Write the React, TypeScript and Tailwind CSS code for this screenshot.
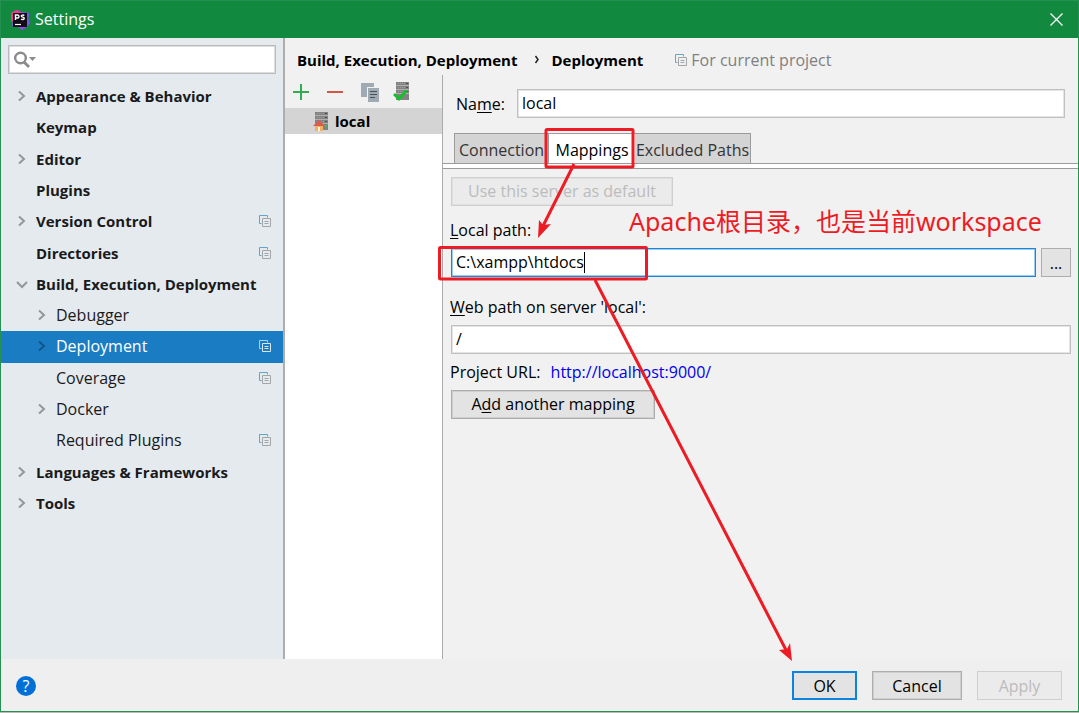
import { useState } from 'react';

type TreeItem = {
  label: string;
  level: 0 | 1;
  arrow?: 'right' | 'down';
  project?: boolean;
};

const treeItems: TreeItem[] = [
  { label: 'Appearance & Behavior', level: 0, arrow: 'right' },
  { label: 'Keymap', level: 0 },
  { label: 'Editor', level: 0, arrow: 'right' },
  { label: 'Plugins', level: 0 },
  { label: 'Version Control', level: 0, arrow: 'right', project: true },
  { label: 'Directories', level: 0, project: true },
  { label: 'Build, Execution, Deployment', level: 0, arrow: 'down' },
  { label: 'Debugger', level: 1, arrow: 'right' },
  { label: 'Deployment', level: 1, arrow: 'right', project: true },
  { label: 'Coverage', level: 1, project: true },
  { label: 'Docker', level: 1, arrow: 'right' },
  { label: 'Required Plugins', level: 1, project: true },
  { label: 'Languages & Frameworks', level: 0, arrow: 'right' },
  { label: 'Tools', level: 0, arrow: 'right' },
];

const tabs = ['Connection', 'Mappings', 'Excluded Paths'];

const fieldStyle = 'h-[29px] min-w-0 border border-[#c0c0c0] bg-white px-1 pb-[2px] shadow-[inset_0_0_0_1px_#e4e4e4] outline-none';

function AppLogo() {
  return (
    <svg width="20" height="20" viewBox="0 0 20 20" aria-hidden="true">
      <path d="M1 3 7 0l5 2 7 1-1 5 2 5-3 4-5 3-4-3-6-1 1-6z" fill="#9b45f2" />
      <path d="M1 3 7 0l5 3-9 8-2 1z" fill="#f23a8d" />
      <path d="m17 3 2 1-1 5 2 4-3 3z" fill="#7b53f5" />
      <rect x="3" y="3" width="14" height="14" fill="#120c18" />
      <path d="M5.500 10V5h2a1.400 1.400 0 0 1 0 3h-2M14.300 5.500c-.8-.6-3-.7-3 .6s3 .7 3 2.200-2.300 1.500-3.200.6" fill="none" stroke="#fff" strokeWidth="1.400" />
      <path d="M5 14.500h6" stroke="#fff" strokeWidth="1.200" />
    </svg>
  );
}

function Chevron({ down, selected }: { down?: boolean; selected?: boolean }) {
  return (
    <svg width="12" height="12" viewBox="0 0 12 12" fill="none" aria-hidden="true" className={selected ? 'text-[#165488]' : 'text-[#939799]'}>
      <path d={down ? 'M1 4l5 5 5-5' : 'M3 1.500l5 4.500-5 4.500'} stroke="currentColor" strokeWidth="2" />
    </svg>
  );
}

function ProjectIcon({ selected }: { selected?: boolean }) {
  const back = selected ? '#a8d5f2' : '#62a5c8';
  const front = selected ? '#d9e6ef' : '#a3a6a8';
  return (
    <svg width="12" height="12" viewBox="0 0 12 12" fill="none" aria-hidden="true">
      <path d="M2.500 8.500h-2v-8h8v2" stroke={back} />
      <path d="M3.500 3.500h8v8h-8z" stroke={front} />
      <path d="M5.500 6.500h4M5.500 8.500h4" stroke={front} />
    </svg>
  );
}

function ServerShape() {
  return (
    <>
      <path d="M4 0h13v18H4z" fill="#828282" />
      <path d="M4 3.500h13M4 7.500h13M4 11.500h13" stroke="#b0b0b0" />
      <path d="M6 1.500h7M6 5.500h7M6 9.500h7" stroke="#9f9f9f" strokeDasharray="1 1" />
      <path d="M14 1h2v1h-2zM14 5h2v1h-2zM14 9h2v1h-2z" fill="#4d4d4d" />
    </>
  );
}

function Toolbar() {
  return (
    <div className="flex h-[33px] items-center gap-[14px] pl-[6px]">
      <button type="button" aria-label="Add" className="flex size-5 items-center justify-center">
        <svg width="16" height="16" viewBox="0 0 16 16"><path d="M8 0v16M0 8h16" stroke="#31ac52" strokeWidth="2" /></svg>
      </button>
      <button type="button" aria-label="Remove" className="flex size-5 items-center justify-center">
        <svg width="16" height="16" viewBox="0 0 16 16"><path d="M0 8h16" stroke="#d4564a" strokeWidth="2" /></svg>
      </button>
      <button type="button" aria-label="Copy" className="flex size-5 items-center justify-center pt-px pl-px">
        <svg width="18" height="19" viewBox="0 0 18 19" className="shrink-0">
          <path d="M0 0h13v4H6v10H0z" fill="#9faab3" />
          <path d="M7 5h11v14H7z" fill="#9faab3" />
          <path d="M9 8.500h7M9 11.500h7M9 14.500h5" stroke="#4a5054" />
        </svg>
      </button>
      <button type="button" aria-label="Use as default" className="flex h-5 w-[18px] items-center">
        <svg width="18" height="19" viewBox="1 0 18 19" className="shrink-0">
          <ServerShape />
          <path d="m2 12 5 5L14.500 8.500" fill="none" stroke="#12c22c" strokeWidth="2.800" />
        </svg>
      </button>
    </div>
  );
}

function Sidebar() {
  const [selected, setSelected] = useState('Deployment');
  return (
    <aside className="w-[284px] shrink-0 border-r-2 border-[#adadad] bg-[#e5eaef]">
      <div className="px-[7px] pt-[7px]">
        <label className="flex h-[29px] items-center border border-[#b9bbbd] bg-white pl-1 shadow-[inset_0_0_0_1px_#dcdddd]">
          <svg width="24" height="18" viewBox="0 0 24 18" fill="none" aria-hidden="true">
            <circle cx="7.500" cy="7" r="5.300" stroke="#8b8b8b" strokeWidth="2.400" />
            <path d="m11 11 5 5" stroke="#8b8b8b" strokeWidth="2.800" />
            <path d="M16 6h7l-3.500 4z" fill="#8b8b8b" />
          </svg>
          <input type="search" aria-label="Search settings" className="min-w-0 flex-1 bg-transparent outline-none" />
        </label>
      </div>
      <ul className="mt-[7px] grid h-[438px] auto-rows-fr">
        {treeItems.map((item) => {
          const active = item.label === selected;
          return (
            <li key={item.label}>
              <button
                type="button"
                onClick={() => setSelected(item.label)}
                className={`flex h-full w-full items-center pr-3 pb-px text-left ${item.level ? 'pl-[35px]' : 'pl-[15px] text-[15px] font-bold'} ${active ? 'bg-[#1a7dc4] text-white' : 'text-[#1a1a1a]'}`}
              >
                <span className="w-5 shrink-0">
                  {item.arrow && <Chevron down={item.arrow === 'down'} selected={active} />}
                </span>
                <span className="flex-1 whitespace-nowrap">{item.label}</span>
                {item.project && <ProjectIcon selected={active} />}
              </button>
            </li>
          );
        })}
      </ul>
    </aside>
  );
}

function ServerList() {
  return (
    <section aria-label="Servers" className="flex w-[158px] shrink-0 flex-col border-r border-[#ababab]">
      <Toolbar />
      <ul className="flex-1 bg-white">
        <li>
          <button type="button" className="flex h-[26px] w-full items-center gap-1 bg-[#d4d4d4] pl-7 text-[15px] font-bold">
            <svg width="18" height="19" viewBox="0 0 18 19" aria-hidden="true">
              <g transform="translate(-2 0)"><ServerShape /></g>
              <path d="M2 13h8v6H2z" fill="#f3b05e" />
              <path d="M0 14l6-6 6 6z" fill="#da5b4c" />
              <path d="M5 15h2v4H5z" fill="#fff3df" />
              <path d="M12 13h2v2h-2z" fill="#38c24c" />
            </svg>
            local
          </button>
        </li>
      </ul>
    </section>
  );
}

function DeploymentForm() {
  const [tab, setTab] = useState('Mappings');
  return (
    <section className="min-w-0 flex-1">
      <div className="flex items-center pl-[13px] pr-[13px] pt-[14px]">
        <label htmlFor="name" className="w-[61px]">Na<u className="underline-offset-2">m</u>e:</label>
        <input id="name" defaultValue="local" className={`flex-1 ${fieldStyle}`} />
      </div>
      <div role="tablist" className="mt-[15px] flex h-[30px] pl-[11px]">
        {tabs.map((name) => (
          <button
            key={name}
            type="button"
            role="tab"
            aria-selected={name === tab}
            onClick={() => setTab(name)}
            className={`border-t border-[#9b9b9b] pt-[3px] whitespace-nowrap ${name === 'Connection' ? 'w-[94px] border-l text-center' : name === 'Mappings' ? 'w-[87px] border-l' : 'w-[116px] border-r'} ${name === tab ? 'bg-white text-black' : 'bg-[#d4d4d4] text-[#333]'}`}
          >
            {name}
          </button>
        ))}
      </div>
      <div className="h-[6px] border-y border-[#9b9b9b] bg-white" />
      <div className="px-[7px] pt-2">
        <button type="button" disabled className="ml-px h-[29px] w-[222px] border border-[#cfcfcf] bg-[#ebebeb] pb-[2px] text-[#bcbcbc] shadow-[inset_0_0_0_1px_#e0e0e0]">
          Use this server as default
        </button>
        <label htmlFor="local-path" className="mt-[13px] block h-[22px] leading-[22px]"><u className="underline-offset-2">L</u>ocal path:</label>
        <div className="mt-[7px] ml-px flex gap-[5px]">
          <div className="relative min-w-0 flex-1">
            <input id="local-path" defaultValue={'C:\\xampp\\htdocs'} className="h-[29px] w-full border border-[#1a86d9] bg-white px-1 pb-[2px] shadow-[inset_0_0_0_1px_#9accf2] outline-none" />
            <span className="absolute top-1 left-[133px] h-[21px] w-px bg-black" />
          </div>
          <button type="button" aria-label="Browse" className="h-[29px] w-[30px] border border-[#adadad] bg-[#e3e3e3]">...</button>
        </div>
        <label htmlFor="web-path" className="mt-[19px] block h-[22px] leading-[22px]"><u className="underline-offset-2">W</u>eb path on server 'local':</label>
        <div className="mt-[7px] ml-px flex">
          <input id="web-path" defaultValue="/" className={`flex-1 ${fieldStyle}`} />
        </div>
        <p className="mt-[7px] h-[22px] leading-[22px]">
          Project URL: <a href="http://localhost:9000/" className="ml-[6px] text-[#0000ee]">http://localhost:9000/</a>
        </p>
        <button type="button" className="mt-[7px] ml-px h-[29px] w-[204px] border border-[#adadad] bg-[#e3e3e3] pb-[2px] shadow-[inset_0_0_0_1px_#cfcfcf]">
          A<u className="underline-offset-2">d</u>d another mapping
        </button>
      </div>
    </section>
  );
}

function Annotations() {
  return (
    <div className="pointer-events-none absolute -inset-px overflow-hidden">
      <svg width="1079" height="713" viewBox="0 0 1079 713" fill="none" className="absolute top-0 left-0" aria-hidden="true">
        <g stroke="#ed1c24" strokeWidth="3">
          <rect x="546" y="129.500" width="87" height="37.500" rx="1" />
          <rect x="439.500" y="247.500" width="207" height="31.500" rx="1" />
          <path d="M574 164l-31 62M595 280l191 370" />
        </g>
        <path d="M538 238l1-18 4 5 8-1zM792 661l-13-11 8-1 3-6z" fill="#ed1c24" />
      </svg>
      <p className="absolute top-[203px] left-[629px] font-['Noto_Sans','Noto_Sans_CJK_SC',sans-serif] text-[25px] leading-9 whitespace-nowrap text-[#ed1c24]">Apache根目录，也是当前workspace</p>
    </div>
  );
}

export default function App() {
  return (
    <div className="min-h-screen bg-[#b9bdb6] pb-px font-['Open_Sans','Noto_Sans_CJK_SC',sans-serif] text-base leading-5 text-black">
      <div className="relative flex min-h-[calc(100vh-1px)] flex-col border border-[#249052] bg-[#f1f1f1]">
        <header className="flex h-[37px] shrink-0 items-center bg-[#11893e] pr-[15px] pl-[9px] text-white">
          <AppLogo />
          <h1 className="ml-[5px] flex-1 pb-[2px]">Settings</h1>
          <button type="button" aria-label="Close" className="flex">
            <svg width="13" height="13" viewBox="0 0 13 13"><path d="m.5.5 12 12m0-12-12 12" stroke="#fff" strokeWidth="1.300" /></svg>
          </button>
        </header>
        <main className="flex flex-1">
          <Sidebar />
          <div className="flex min-w-0 flex-1 flex-col">
            <div className="flex h-[37px] items-center pt-[6px] pl-3">
              <h2 className="flex items-center text-[15px] font-bold whitespace-nowrap">
                Build, Execution, Deployment
                <svg width="6" height="10" viewBox="0 0 6 10" fill="none" className="mr-3 ml-4" aria-hidden="true"><path d="m1.500 1 2.500 3.500L1.500 8" stroke="#222" strokeWidth="1.500" /></svg>
                Deployment
              </h2>
              <p className="ml-8 flex items-center gap-1 text-[#808080]"><ProjectIcon />For current project</p>
            </div>
            <div className="flex flex-1">
              <ServerList />
              <DeploymentForm />
            </div>
          </div>
        </main>
        <footer className="flex h-[52px] shrink-0 items-center bg-[#efefef] pt-px pr-4 pl-[15px]">
          <button type="button" aria-label="Help" className="size-5 rounded-full bg-[#0070d6] text-center text-white">?</button>
          <div className="ml-auto flex gap-[15px]">
            <button type="button" className="h-[29px] w-[65px] border-2 border-[#0a84e0] bg-[#e3e3e3]">OK</button>
            <button type="button" className="h-[29px] w-[90px] border border-[#adadad] bg-[#e3e3e3] shadow-[inset_0_0_0_1px_#cfcfcf]">Cancel</button>
            <button type="button" disabled className="h-[29px] w-[85px] border border-[#cfcfcf] bg-[#ebebeb] text-[#bcbcbc]">Apply</button>
          </div>
        </footer>
        <Annotations />
      </div>
    </div>
  );
}
